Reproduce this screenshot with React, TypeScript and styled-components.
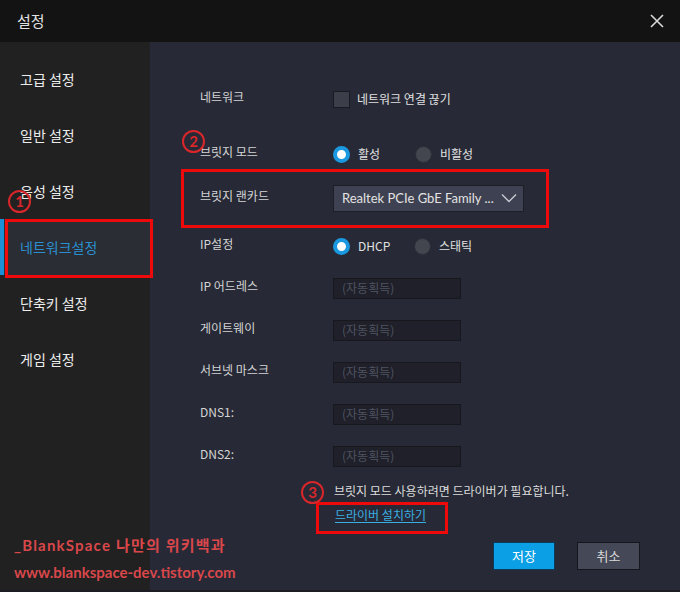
import React from "react";
import styled, { createGlobalStyle } from "styled-components";

const Global = createGlobalStyle`
  html, body { margin: 0; padding: 0; background: #272a36; }
  body { font-family: "Noto Sans CJK KR", "Noto Sans", sans-serif; }
  * { box-sizing: border-box; }
`;

const Window = styled.div`
  position: relative;
  width: 680px;
  height: 592px;
  display: flex;
  flex-direction: column;
  background: #272a36;
  overflow: hidden;
`;

const TitleBar = styled.header`
  height: 42px;
  flex: none;
  display: flex;
  align-items: center;
  justify-content: space-between;
  padding: 0 13px 0 17px;
  background: #131313;
  color: #e2e2e2;
  font-size: 15px;
  line-height: 20px;
`;

const CloseBtn = styled.button`
  width: 20px;
  height: 20px;
  padding: 0;
  border: none;
  background: transparent;
  display: flex;
  align-items: center;
  justify-content: center;
`;

const Body = styled.div`
  flex: 1;
  display: flex;
  border-bottom: 2px solid #1c1d24;
`;

const Sidebar = styled.nav`
  width: 150px;
  flex: none;
  background: #212121;
  padding-top: 9px;
  display: flex;
  flex-direction: column;
`;

const NavItem = styled.div<{ $active?: boolean }>`
  height: 56px;
  display: flex;
  align-items: center;
  padding-left: 20px;
  font-size: 14px;
  line-height: 18px;
  color: ${(p) => (p.$active ? "#2a8fd0" : "#ececec")};
  background: ${(p) => (p.$active ? "#2a2d33" : "transparent")};
  box-shadow: ${(p) => (p.$active ? "inset 4px 0 0 #1b8fd6" : "none")};
`;

const Content = styled.main`
  flex: 1;
  padding: 43px 40px 0 50px;
  display: flex;
  flex-direction: column;
`;

const Row = styled.div<{ $mt: number }>`
  display: grid;
  grid-template-columns: 133px auto;
  align-items: center;
  height: 28px;
  margin-top: ${(p) => p.$mt}px;
`;

const Label = styled.span`
  font-size: 12px;
  line-height: 16px;
  color: #d4d4d4;
  padding-bottom: 5px;
`;

const Controls = styled.div`
  display: flex;
  align-items: center;
`;

const Option = styled.label<{ $w?: number }>`
  display: flex;
  align-items: center;
  gap: 8px;
  width: ${(p) => (p.$w ? `${p.$w}px` : "auto")};
  font-size: 12px;
  line-height: 16px;
  color: #e0e0e0;
`;

const Check = styled.span`
  width: 17px;
  height: 17px;
  flex: none;
  background: #3c3e49;
  border: 1px solid #1a1b22;
  margin-right: -1px;
`;

const Radio = styled.span<{ $on?: boolean }>`
  width: 17px;
  height: 17px;
  border-radius: 50%;
  flex: none;
  background: ${(p) => (p.$on ? "#ffffff" : "#44464f")};
  border: ${(p) => (p.$on ? "4.5px solid #1a98e0" : "1px solid #2c2d35")};
`;

const Select = styled.div`
  width: 191px;
  height: 27px;
  display: flex;
  align-items: center;
  justify-content: space-between;
  padding: 0 6px 0 8px;
  background: #3e4151;
  border: 1px solid #1d1e26;
  color: #e2e2e2;
  font-family: "Lato", "Liberation Sans", sans-serif;
  font-size: 13px;
  line-height: 16px;
  white-space: nowrap;
`;

const Field = styled.div`
  width: 128px;
  height: 21px;
  display: flex;
  align-items: center;
  padding-left: 8px;
  background: #1f2029;
  border: 1px solid #17181e;
  color: #4f5361;
  font-size: 12px;
  line-height: 16px;
`;

const Note = styled.p`
  margin: 12px 0 0 134px;
  font-size: 12px;
  line-height: 18px;
  color: #dcdcdc;
`;

const Link = styled.a`
  margin: 6px 0 0 135px;
  font-size: 12px;
  line-height: 18px;
  color: #3aaee2;
  text-decoration: underline;
  text-underline-offset: 2px;
  align-self: flex-start;
`;

const Buttons = styled.div`
  display: flex;
  justify-content: flex-end;
  gap: 22px;
  margin-top: 18px;
`;

const Btn = styled.button<{ $primary?: boolean }>`
  width: ${(p) => (p.$primary ? 62 : 63)}px;
  height: 28px;
  padding: 0;
  font-family: inherit;
  font-size: 13px;
  line-height: 16px;
  color: ${(p) => (p.$primary ? "#ffffff" : "#d8d8d8")};
  background: ${(p) => (p.$primary ? "#0b9fe5" : "#454857")};
  border: 1px solid ${(p) => (p.$primary ? "#0a3a58" : "#16171c")};
`;

/* annotation overlays */
const RedBox = styled.div<{ $x: number; $y: number; $w: number; $h: number }>`
  position: absolute;
  left: ${(p) => p.$x}px;
  top: ${(p) => p.$y}px;
  width: ${(p) => p.$w}px;
  height: ${(p) => p.$h}px;
  border: 3px solid #ee0a0a;
  pointer-events: none;
`;

const Badge = styled.div<{ $x: number; $y: number }>`
  position: absolute;
  left: ${(p) => p.$x}px;
  top: ${(p) => p.$y}px;
  width: 23px;
  height: 23px;
  border-radius: 50%;
  border: 2px solid #d8262a;
  color: #d8262a;
  display: flex;
  align-items: center;
  justify-content: center;
  font-family: "Lato", "Liberation Sans", sans-serif;
  font-weight: 700;
  font-size: 15px;
  line-height: 1;
`;

const Watermark = styled.div`
  position: absolute;
  left: 14px;
  top: 535px;
  display: flex;
  flex-direction: column;
  gap: 7px;
  color: #d9474b;
  font-family: "Lato", "Noto Sans CJK KR", sans-serif;
  font-weight: 700;
  font-size: 15px;
  line-height: 20px;
`;

const WmLine = styled.span<{ $ls?: number }>`
  letter-spacing: ${(p) => p.$ls ?? 0}px;
  white-space: nowrap;
`;

const XIcon = () => (
  <svg width="16" height="16" viewBox="0 0 16 16">
    <path d="M2 2 L14 14 M14 2 L2 14" stroke="#dadada" strokeWidth="1.6" fill="none" />
  </svg>
);

const Chevron = () => (
  <svg width="16" height="10" viewBox="0 0 16 10">
    <path d="M1 1.5 L8 8.5 L15 1.5" stroke="#c8cad2" strokeWidth="1.4" fill="none" />
  </svg>
);

const navItems = ["고급 설정", "일반 설정", "음성 설정", "네트워크설정", "단축키 설정", "게임 설정"];
const fields: [string, number][] = [
  ["IP 어드레스", 14],
  ["게이트웨이", 14],
  ["서브넷 마스크", 14],
  ["DNS1:", 14],
  ["DNS2:", 14],
];

export default function App() {
  return (
    <Window>
      <Global />
      <TitleBar>
        <span>설정</span>
        <CloseBtn aria-label="닫기">
          <XIcon />
        </CloseBtn>
      </TitleBar>
      <Body>
        <Sidebar>
          {navItems.map((n, i) => (
            <NavItem key={n} $active={i === 3}>
              {n}
            </NavItem>
          ))}
        </Sidebar>
        <Content>
          <Row $mt={0}>
            <Label>네트워크</Label>
            <Controls>
              <Option>
                <Check />
                네트워크 연결 끊기
              </Option>
            </Controls>
          </Row>
          <Row $mt={27}>
            <Label>브릿지 모드</Label>
            <Controls>
              <Option $w={82}>
                <Radio $on />
                활성
              </Option>
              <Option>
                <Radio />
                비활성
              </Option>
            </Controls>
          </Row>
          <Row $mt={16}>
            <Label>브릿지 랜카드</Label>
            <Controls>
              <Select>
                <span>Realtek PCIe GbE Family ...</span>
                <Chevron />
              </Select>
            </Controls>
          </Row>
          <Row $mt={20}>
            <Label>IP설정</Label>
            <Controls>
              <Option $w={81}>
                <Radio $on />
                DHCP
              </Option>
              <Option>
                <Radio />
                스태틱
              </Option>
            </Controls>
          </Row>
          {fields.map(([l, mt]) => (
            <Row key={l} $mt={mt}>
              <Label>{l}</Label>
              <Controls>
                <Field>(자동획득)</Field>
              </Controls>
            </Row>
          ))}
          <Note>브릿지 모드 사용하려면 드라이버가 필요합니다.</Note>
          <Link>드라이버 설치하기</Link>
          <Buttons>
            <Btn $primary>저장</Btn>
            <Btn>취소</Btn>
          </Buttons>
        </Content>
      </Body>

      <RedBox $x={5} $y={219} $w={148} $h={59} />
      <RedBox $x={181} $y={169} $w={368} $h={59} />
      <RedBox $x={316} $y={502} $w={132} $h={32} />
      <Badge $x={8} $y={190}>1</Badge>
      <Badge $x={182} $y={130}>2</Badge>
      <Badge $x={301} $y={481}>3</Badge>
      <Watermark>
        <WmLine $ls={1.2}>_BlankSpace 나만의 위키백과</WmLine>
        <WmLine>www.blankspace-dev.tistory.com</WmLine>
      </Watermark>
    </Window>
  );
}
